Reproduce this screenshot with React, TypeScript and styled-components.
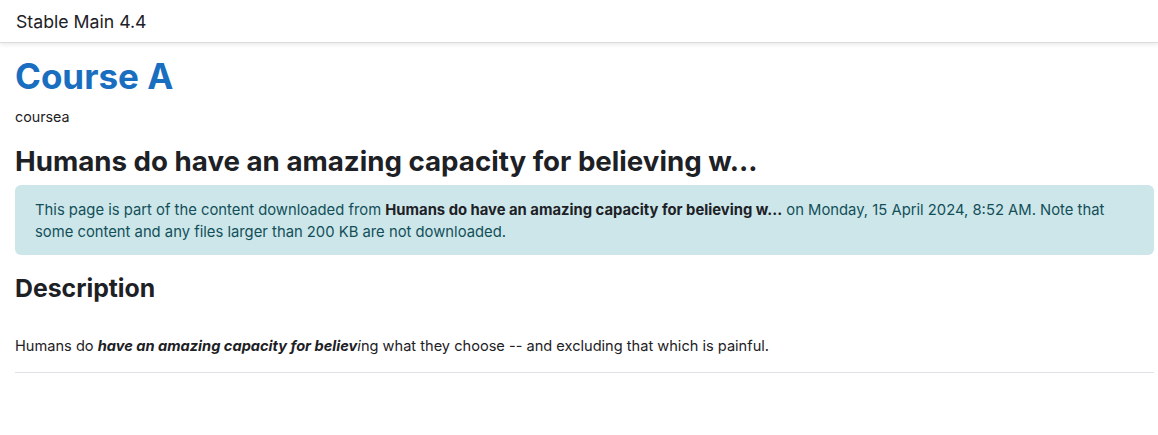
import React from "react"
import styled, { createGlobalStyle } from "styled-components"

const GlobalStyle = createGlobalStyle`
  html, body {
    margin: 0;
    padding: 0;
    background: #fff;
  }
  body {
    font-family: Inter, Roboto, "Liberation Sans", sans-serif;
    color: #1d2125;
  }
`

const NavBar = styled.header`
  height: 43px;
  display: flex;
  align-items: center;
  padding: 0 16px;
  background: #fff;
  box-shadow: 0 2px 4px rgba(0, 0, 0, 0.08);
  border-bottom: 1px solid #dcdcdc;
  box-sizing: border-box;
`

const SiteName = styled.span`
  font-size: 17.7px;
  color: #1d2125;
`

const Page = styled.main`
  padding: 11px 4px 0 15px;
`

const CourseTitle = styled.h1`
  margin: 0;
  font-size: 35px;
  line-height: 44px;
  font-weight: 700;
  color: #1a6ec0;
`

const ShortName = styled.div`
  margin-top: 9px;
  font-size: 14.3px;
  line-height: 20px;
`

const ActivityTitle = styled.h2`
  margin: 15px 0 0;
  font-size: 27.7px;
  line-height: 38px;
  font-weight: 700;
`

const Notice = styled.div`
  margin-top: 5px;
  padding: 14px 20px 12px 20px;
  background: #cce6ea;
  color: #134f58;
  border-radius: 6px;
  font-size: 14.8px;
  line-height: 22px;

  strong {
    color: #1d2125;
    font-weight: 700;
  }
`

const SectionTitle = styled.h3`
  margin: 16px 0 0;
  font-size: 24.8px;
  line-height: 34px;
  font-weight: 700;
`

const Body = styled.p`
  margin: 30px 0 0;
  font-size: 14.6px;
  line-height: 22px;
  padding-bottom: 15px;
  border-bottom: 1px solid #dee2e6;
`

export default function App() {
  return (
    <>
      <GlobalStyle />
      <NavBar>
        <SiteName>Stable Main 4.4</SiteName>
      </NavBar>
      <Page>
        <CourseTitle>Course A</CourseTitle>
        <ShortName>coursea</ShortName>
        <ActivityTitle>Humans do have an amazing capacity for believing w...</ActivityTitle>
        <Notice>
          This page is part of the content downloaded from{" "}
          <strong>Humans do have an amazing capacity for believing w...</strong> on
          Monday, 15 April 2024, 8:52 AM. Note that some content and any files larger
          than 200 KB are not downloaded.
        </Notice>
        <SectionTitle>Description</SectionTitle>
        <Body>
          Humans do <strong><em>have an amazing capacity for believ</em></strong>
          <em>i</em>ng what they choose -- and excluding that which is painful.
        </Body>
      </Page>
    </>
  )
}
